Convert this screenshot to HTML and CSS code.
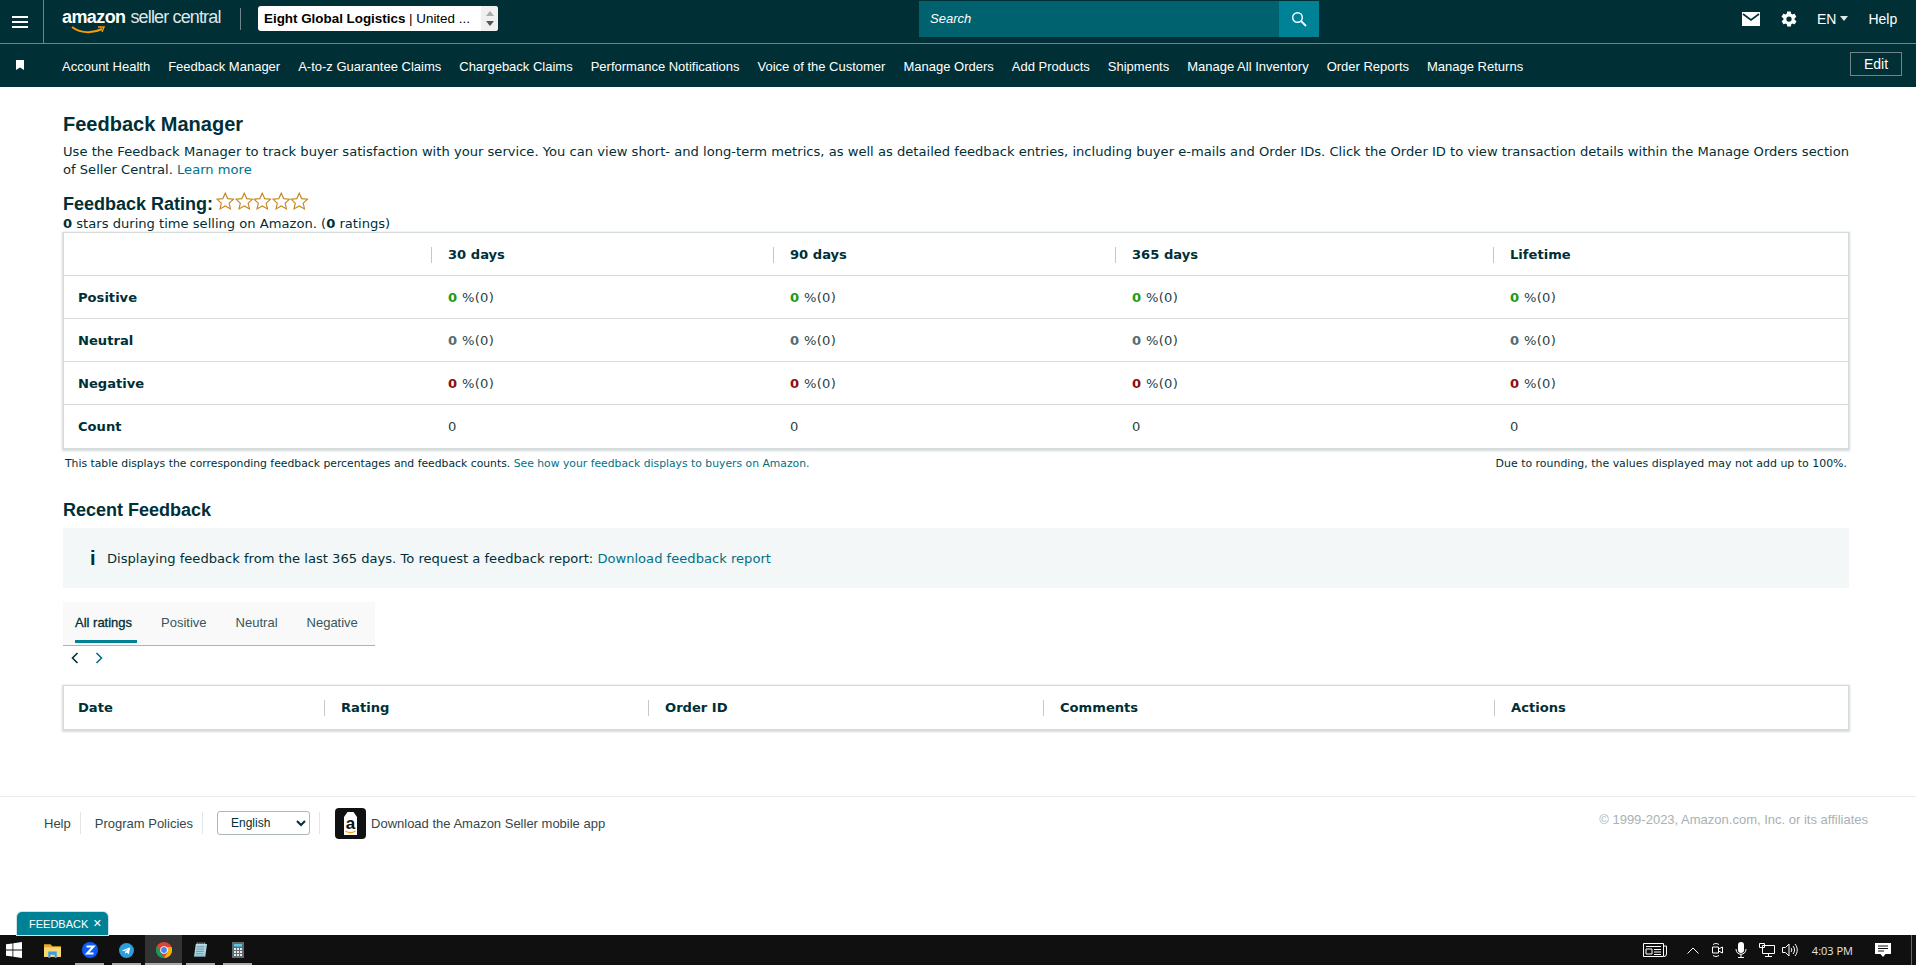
FILE: index.html
```html
<!DOCTYPE html>
<html lang="en">
<head>
    <meta charset="UTF-8">
    <meta name="viewport" content="width=device-width, initial-scale=1.0">
    <title>Feedback Manager - Amazon Seller Central</title>
    <link rel="stylesheet" href="styles.css">
</head>
<body>
    <div class="page">
        <header class="topbar">
            <div class="menu-cell">
                <svg class="icon-menu" viewBox="0 0 16 12"><path d="M0 1h16M0 6h16M0 11h16" stroke="#fff" stroke-width="2"/></svg>
            </div>
            <div class="logo">
                <span class="logo-amazon">amazon<svg class="logo-smile" viewBox="0 0 34 9"><path d="M1 1c8 6 20 7 30 2" fill="none" stroke="#f90" stroke-width="2"/><path d="M27 1l6 0-2 5" fill="none" stroke="#f90" stroke-width="1.4"/></svg></span>
                <span class="logo-seller">seller central</span>
            </div>
            <span class="top-sep"></span>
            <div class="account-select">
                <span class="account-text"><b>Eight Global Logistics</b> | United ...</span>
                <span class="account-spin"><i class="spin-up"></i><i class="spin-down"></i></span>
            </div>
            <div class="search">
                <span class="search-input">Search</span>
                <span class="search-btn">
                    <svg viewBox="0 0 16 16" width="16" height="16"><circle cx="6.5" cy="6.5" r="4.8" fill="none" stroke="#fff" stroke-width="1.4"/><path d="M10 10l5 5" stroke="#fff" stroke-width="1.8"/></svg>
                </span>
            </div>
            <div class="top-right">
                <svg class="icon-mail" viewBox="0 0 18 14"><path fill="#fff" d="M0 0h18v14H0z"/><path d="M1 2l8 6 8-6" fill="none" stroke="#002f36" stroke-width="1.6"/></svg>
                <svg class="icon-gear" viewBox="0 0 24 24"><path fill="#fff" fill-rule="evenodd" d="M19.4 13c.1-.3.1-.7.1-1s0-.7-.1-1l2.1-1.6c.2-.2.2-.4.1-.6l-2-3.5c-.1-.2-.4-.3-.6-.2l-2.5 1c-.5-.4-1.1-.7-1.7-1l-.4-2.6c0-.3-.2-.5-.5-.5h-4c-.3 0-.5.2-.5.5l-.4 2.6c-.6.3-1.2.6-1.7 1l-2.5-1c-.2-.1-.5 0-.6.2l-2 3.5c-.1.2-.1.4.1.6L4.6 11c0 .3-.1.7-.1 1s0 .7.1 1l-2.1 1.6c-.2.2-.2.4-.1.6l2 3.5c.1.2.4.3.6.2l2.5-1c.5.4 1.1.7 1.7 1l.4 2.6c0 .3.2.5.5.5h4c.3 0 .5-.2.5-.5l.4-2.6c.6-.3 1.2-.6 1.7-1l2.5 1c.2.1.5 0 .6-.2l2-3.5c.1-.2.1-.4-.1-.6L19.4 13zM12 15.5a3.5 3.5 0 1 1 0-7 3.5 3.5 0 0 1 0 7z"/></svg>
                <span class="lang">EN<i class="caret"></i></span>
                <span class="help">Help</span>
            </div>
        </header>

        <nav class="navbar">
            <svg class="icon-bookmark" viewBox="0 0 8 10"><path fill="#fff" d="M0 0h8v10L4 7.6 0 10z"/></svg>
            <div class="nav-links">
                <a>Account Health</a>
                <a>Feedback Manager</a>
                <a>A-to-z Guarantee Claims</a>
                <a>Chargeback Claims</a>
                <a>Performance Notifications</a>
                <a>Voice of the Customer</a>
                <a>Manage Orders</a>
                <a>Add Products</a>
                <a>Shipments</a>
                <a>Manage All Inventory</a>
                <a>Order Reports</a>
                <a>Manage Returns</a>
            </div>
            <span class="edit-btn">Edit</span>
        </nav>

        <main class="content">
            <h1 class="title">Feedback Manager</h1>
            <p class="intro">Use the Feedback Manager to track buyer satisfaction with your service. You can view short- and long-term metrics, as well as detailed feedback entries, including buyer e-mails and Order IDs. Click the Order ID to view transaction details within the Manage Orders section of Seller Central. <a class="link">Learn more</a></p>

            <div class="rating-head">
                <h2 class="rating-title">Feedback Rating:</h2>
                <div class="stars">
                    <svg viewBox="0 0 16 16"><use href="#star"/></svg>
                    <svg viewBox="0 0 16 16"><use href="#star"/></svg>
                    <svg viewBox="0 0 16 16"><use href="#star"/></svg>
                    <svg viewBox="0 0 16 16"><use href="#star"/></svg>
                    <svg viewBox="0 0 16 16"><use href="#star"/></svg>
                </div>
            </div>
            <p class="rating-sub"><b>0</b> stars during time selling on Amazon. (<b>0</b> ratings)</p>

            <div class="card">
                <div class="row row-head metrics">
                    <div></div>
                    <div class="cell-head">30 days</div>
                    <div class="cell-head">90 days</div>
                    <div class="cell-head">365 days</div>
                    <div class="cell-head">Lifetime</div>
                </div>
                <div class="row metrics">
                    <div class="row-label">Positive</div>
                    <div class="cell"><b class="pos">0</b> %(0)</div>
                    <div class="cell"><b class="pos">0</b> %(0)</div>
                    <div class="cell"><b class="pos">0</b> %(0)</div>
                    <div class="cell"><b class="pos">0</b> %(0)</div>
                </div>
                <div class="row metrics">
                    <div class="row-label">Neutral</div>
                    <div class="cell"><b class="neu">0</b> %(0)</div>
                    <div class="cell"><b class="neu">0</b> %(0)</div>
                    <div class="cell"><b class="neu">0</b> %(0)</div>
                    <div class="cell"><b class="neu">0</b> %(0)</div>
                </div>
                <div class="row metrics">
                    <div class="row-label">Negative</div>
                    <div class="cell"><b class="neg">0</b> %(0)</div>
                    <div class="cell"><b class="neg">0</b> %(0)</div>
                    <div class="cell"><b class="neg">0</b> %(0)</div>
                    <div class="cell"><b class="neg">0</b> %(0)</div>
                </div>
                <div class="row metrics">
                    <div class="row-label">Count</div>
                    <div class="cell">0</div>
                    <div class="cell">0</div>
                    <div class="cell">0</div>
                    <div class="cell">0</div>
                </div>
            </div>
            <div class="table-note">
                <span>This table displays the corresponding feedback percentages and feedback counts. <a class="link">See how your feedback displays to buyers on Amazon.</a></span>
                <span class="note-right">Due to rounding, the values displayed may not add up to 100%.</span>
            </div>

            <h2 class="recent-title">Recent Feedback</h2>
            <div class="info-box">
                <span class="info-i">i</span>
                <span>Displaying feedback from the last 365 days. To request a feedback report: <a class="link">Download feedback report</a></span>
            </div>

            <div class="tabs">
                <span class="tab tab-active">All ratings</span>
                <span class="tab">Positive</span>
                <span class="tab">Neutral</span>
                <span class="tab">Negative</span>
            </div>
            <div class="pager">
                <svg viewBox="0 0 8 12"><path d="M6.5 1L1.5 6l5 5" fill="none" stroke="#002f36" stroke-width="1.6"/></svg>
                <svg viewBox="0 0 8 12"><path d="M1.5 1l5 5-5 5" fill="none" stroke="#007185" stroke-width="1.6"/></svg>
            </div>

            <div class="card card-recent">
                <div class="row row-head recent">
                    <div class="cell-first">Date</div>
                    <div class="cell-head">Rating</div>
                    <div class="cell-head">Order ID</div>
                    <div class="cell-head">Comments</div>
                    <div class="cell-head">Actions</div>
                </div>
            </div>
        </main>

        <footer class="footer">
            <div class="footer-left">
                <span class="foot-link">Help</span>
                <span class="foot-sep"></span>
                <span class="foot-link">Program Policies</span>
                <span class="foot-sep"></span>
                <select class="foot-select"><option>English</option></select>
                <span class="foot-sep"></span>
                <svg class="app-icon" viewBox="0 0 31 31">
                    <rect width="31" height="31" rx="4" fill="#111"/>
                    <path d="M12.500 4h6l3.500 5v18H9V9z" fill="#fff"/>
                    <text x="15.500" y="21" text-anchor="middle" class="app-icon-a">a</text>
                    <path d="M10.500 23c3 2 7 2 10 0" fill="none" stroke="#f90" stroke-width="1.2"/>
                </svg>
                <span class="foot-link">Download the Amazon Seller mobile app</span>
            </div>
            <span class="copyright">© 1999-2023, Amazon.com, Inc. or its affiliates</span>
        </footer>

        <div class="taskbar">
            <div class="task-apps">
                <span class="task task-start">
                    <svg viewBox="0 0 16 16" width="16" height="16"><path fill="#fff" d="M0 2.3l6.5-.9v6.2H0zM7.300 1.300L16 0v7.600H7.300zM0 8.400h6.500v6.200L0 13.700zM7.300 8.400H16V16l-8.700-1.300z"/></svg>
                </span>
                <span class="task">
                    <svg viewBox="0 0 16 14" width="17" height="15"><path fill="#e8a92b" d="M0 1h6l2 2h8v10H0z"/><path fill="#f8d775" d="M0 4h16v9H0z"/><path fill="#3f9be0" d="M4 8h8v6h-2v-3H6v3H4z"/></svg>
                </span>
                <span class="task task-run">
                    <svg viewBox="0 0 16 16" width="16" height="16"><circle cx="8" cy="8" r="8" fill="#0b5cff"/><path d="M4.500 4.500h7L5 11.500h6.500" fill="none" stroke="#fff" stroke-width="2"/></svg>
                </span>
                <span class="task task-run">
                    <svg viewBox="0 0 16 16" width="15" height="15"><circle cx="8" cy="8" r="8" fill="#2b9fd9"/><path fill="#fff" d="M3 8l9-3.600-1.500 7.600-2.500-1.800-1.300 1.200-.3-2.200 3.800-3.200-4.800 2.800z"/></svg>
                </span>
                <span class="task task-run task-active">
                    <svg viewBox="0 0 16 16" width="16" height="16"><circle cx="8" cy="8" r="8" fill="#db4437"/><path fill="#0f9d58" d="M8 16A8 8 0 0 1 1 4l4 7 3 5z"/><path fill="#f4b400" d="M8 16l3.500-5.500L8 5h7.500A8 8 0 0 1 8 16z"/><circle cx="8" cy="8" r="3.800" fill="#fff"/><circle cx="8" cy="8" r="2.900" fill="#4285f4"/></svg>
                </span>
                <span class="task task-run">
                    <svg viewBox="0 0 16 16" width="15" height="16"><path fill="#a9d3e0" d="M3 1.500h12l-2 14H1z"/><path fill="#5f8a99" d="M1 15.500h12l.2-1.500H1.200z"/><path stroke="#4d7c8c" stroke-width=".7" d="M4 4.500h8M3.700 7h8M3.300 9.500h8M3 12h8"/><path stroke="#dfe6e7" stroke-width=".8" d="M4.500 0v3M6.500 0v3M8.500 0v3M10.500 0v3M12.500 0v3"/></svg>
                </span>
                <span class="task task-run">
                    <svg viewBox="0 0 12 16" width="12" height="16"><path fill="#5f6b73" d="M0 0h12v16H0z"/><path fill="#5cc8e8" d="M2 2h8v2.500H2z"/><path fill="#e6e6e6" d="M2 6h2v2H2zM5 6h2v2H5zM8 6h2v2H8zM2 9h2v2H2zM5 9h2v2H5zM8 9h2v2H8zM2 12h2v2H2zM5 12h2v2H5zM8 12h2v2H8z"/></svg>
                </span>
            </div>
            <div class="tray">
                <svg class="tray-news" viewBox="0 0 24 14" width="24" height="14"><path fill="none" stroke="#fff" d="M.5.5h20v13H.5zM20.500 3h3v8a2.500 2.500 0 0 1-2.500 2.500M3 3.500h15M3 6h6v5H3zM11 6.500h7M11 9h7M11 11.500h7"/></svg>
                <svg class="tray-caret" viewBox="0 0 12 7" width="12" height="7"><path d="M.5 6.500L6 1l5.500 5.500" fill="none" stroke="#fff"/></svg>
                <svg class="tray-meet" viewBox="0 0 12 16" width="12" height="16"><path fill="none" stroke="#fff" d="M1.500 5h6v6h-6zM7.500 7l4-2v6l-4-2M2 2.500c2-1.300 4-1.300 6 0M2 13.500c2 1.300 4 1.300 6 0"/></svg>
                <svg class="tray-mic" viewBox="0 0 12 16" width="12" height="16"><rect x="3" y="0" width="6" height="11" rx="3" fill="#fff"/><path d="M1 7c0 7 10 7 10 0M6 12v3M3 15.500h6" fill="none" stroke="#fff"/></svg>
                <svg class="tray-net" viewBox="0 0 16 14" width="16" height="14"><path fill="none" stroke="#fff" d="M3.500 2.500h12v8h-12zM9.500 10.500v3M6 13.500h7M.5.500h5v4h-5z"/></svg>
                <svg class="tray-vol" viewBox="0 0 16 14" width="16" height="14"><path fill="none" stroke="#fff" d="M.5 4.500h3l3.500-3.500v12l-3.500-3.500h-3zM9 5c1 1.300 1 2.700 0 4M11 3c2 2.500 2 5.500 0 8M13 1c3 3.500 3 8.500 0 12"/></svg>
                <span class="tray-time">4:03 PM</span>
                <svg class="tray-note" viewBox="0 0 16 15" width="16" height="15"><path fill="#fff" d="M0 0h16v11h-5.500L8 14l-2.500-3H0z"/><path stroke="#101010" d="M3 3h10M3 5.500h10M3 8h6"/></svg>
                <span class="tray-edge"></span>
            </div>
        </div>

        <div class="feedback-tab">FEEDBACK<span class="feedback-x">×</span></div>
    </div>

    <svg class="defs" width="0" height="0">
        <symbol id="star" viewBox="0 0 16 16">
            <path d="M8 1l2.100 4.700 5.100.5-3.800 3.400 1.100 5L8 12l-4.500 2.600 1.100-5L.8 6.200l5.100-.5z" fill="none" stroke="#c7861f" stroke-width="1"/>
        </symbol>
    </svg>
</body>
</html>
```

FILE: styles.css
```css
* {
    margin: 0;
    padding: 0;
    box-sizing: border-box;
}

html, body {
    height: 100%;
    overflow: hidden;
}

body {
    background: #fff;
    color: #002f36;
    font-family: "DejaVu Sans", sans-serif;
    font-size: 13.1px;
}

.page {
    position: relative;
    height: 965px;
    display: flex;
    flex-direction: column;
}

.defs {
    position: absolute;
}

.link {
    color: #007185;
}

/* top bar */
.topbar {
    height: 44px;
    flex: none;
    background: #002f36;
    border-bottom: 1px solid #6f8589;
    display: flex;
    color: #fff;
    font-family: "Liberation Sans", sans-serif;
}

.menu-cell {
    width: 44px;
    border-right: 1px solid #6f8589;
    display: flex;
    align-items: center;
    padding-left: 12px;
}

.icon-menu {
    width: 16px;
    height: 12px;
}

.logo {
    width: 178px;
    margin-left: 18px;
    display: flex;
    gap: 5px;
    padding-top: 7px;
    white-space: nowrap;
}

.logo-amazon {
    position: relative;
    font-size: 18px;
    font-weight: bold;
    letter-spacing: -0.6px;
}

.logo-smile {
    position: absolute;
    left: 9px;
    top: 19px;
    width: 34px;
    height: 9px;
}

.logo-seller {
    font-size: 18px;
    letter-spacing: -0.85px;
    color: #dfe6e7;
}

.top-sep {
    height: 22px;
    margin-top: 8px;
    border-left: 1px solid #6f8589;
}

.account-select {
    width: 240px;
    height: 25px;
    margin: 6px 0 0 17px;
    background: #fff;
    border-radius: 3px;
    color: #000;
    font-size: 13.4px;
    display: flex;
    align-items: center;
    padding-left: 6px;
}

.account-text {
    flex: 1;
    white-space: nowrap;
}

.account-spin {
    width: 17px;
    height: 25px;
    background: #f0f0f0;
    border-radius: 0 3px 3px 0;
    display: flex;
    flex-direction: column;
    align-items: center;
    justify-content: center;
    gap: 5px;
}

.spin-up {
    border: 4px solid transparent;
    border-top: 0;
    border-bottom: 5px solid #aaa;
}

.spin-down {
    border: 4px solid transparent;
    border-bottom: 0;
    border-top: 5px solid #555;
}

.search {
    width: 400px;
    height: 36px;
    margin: 1px 0 0 421px;
    background: #00626e;
    display: flex;
}

.search-input {
    flex: 1;
    padding-left: 11px;
    font-size: 13px;
    font-style: italic;
    line-height: 36px;
}

.search-btn {
    width: 40px;
    background: #008296;
    display: flex;
    align-items: center;
    justify-content: center;
}

.top-right {
    display: flex;
    align-items: center;
    margin-left: 423px;
    height: 37px;
    font-size: 14px;
}

.icon-mail {
    width: 18px;
    height: 14px;
}

.icon-gear {
    width: 18px;
    height: 18px;
    margin-left: 20px;
}

.lang {
    margin-left: 19px;
    display: flex;
    align-items: center;
}

.caret {
    margin-left: 4px;
    border: 4px solid transparent;
    border-bottom: 0;
    border-top: 5px solid #dfe6e7;
}

.help {
    margin-left: 20px;
}

/* nav bar */
.navbar {
    height: 43px;
    flex: none;
    background: #002f36;
    display: flex;
    align-items: center;
    color: #fff;
    font-family: "Liberation Sans", sans-serif;
    font-size: 13px;
}

.icon-bookmark {
    width: 8px;
    height: 10px;
    margin: 0 0 1px 16px;
}

.nav-links {
    margin: 2px 0 0 38px;
    display: flex;
    gap: 18px;
    flex: 1;
    white-space: nowrap;
}

.edit-btn {
    width: 52px;
    height: 24px;
    margin: 0 14px 3px 0;
    border: 1px solid #6f8589;
    line-height: 22px;
    text-align: center;
    font-size: 14px;
}

/* content */
.content {
    flex: 1;
    padding: 25px 67px 0 63px;
}

.title {
    font-family: "Liberation Sans", sans-serif;
    font-size: 20px;
    line-height: 24px;
}

.intro {
    margin-top: 7px;
    line-height: 18px;
    text-align: justify;
}

.rating-head {
    margin-top: 15px;
    display: flex;
    align-items: center;
    gap: 3px;
    height: 20px;
}

.rating-title {
    font-family: "Liberation Sans", sans-serif;
    font-size: 18px;
}

.stars {
    display: flex;
    margin-top: -5px;
}

.stars svg {
    width: 18.500px;
    height: 18.500px;
}

.rating-sub {
    padding-top: 1px;
    line-height: 17px;
}

.card {
    border: 1px solid #d5dbdb;
    box-shadow: 0 1px 2px 1px #d5d9d9;
}

.row {
    height: 43px;
    display: grid;
    align-items: center;
    border-bottom: 1px solid #d5dbdb;
}

.row:last-child {
    border-bottom: 0;
}

.metrics {
    grid-template-columns: 367px 342px 342px 378px 1fr;
}

.recent {
    grid-template-columns: 260px 324px 395px 451px 1fr;
}

.cell-head {
    font-weight: bold;
    padding-left: 17px;
    position: relative;
}

.cell-head::before {
    content: "";
    position: absolute;
    left: 0;
    top: 0;
    height: 16px;
    border-left: 1px solid #c2c9ca;
}

.cell-first,
.row-label {
    font-weight: bold;
    padding-left: 14px;
}

.cell {
    padding-left: 17px;
    color: #2b3f43;
    letter-spacing: 0.3px;
}

.pos {
    color: #1f9b12;
}

.neu {
    color: #5a6b74;
}

.neg {
    color: #8c0f0f;
}

.table-note {
    display: flex;
    justify-content: space-between;
    margin-top: 8px;
    padding: 0 2px;
    font-size: 10.800px;
    line-height: 14px;
}

.note-right {
    font-size: 10.950px;
}

.recent-title {
    margin-top: 28px;
    font-family: "Liberation Sans", sans-serif;
    font-size: 18px;
    line-height: 22px;
}

.info-box {
    margin-top: 7px;
    height: 60px;
    background: #f3f7f8;
    display: flex;
    align-items: center;
    padding-left: 27px;
}

.info-i {
    font-family: "Liberation Sans", sans-serif;
    font-size: 20px;
    font-weight: bold;
    width: 17px;
}

.tabs {
    margin-top: 14px;
    width: 312px;
    height: 44px;
    background: #f9f9f9;
    border-bottom: 1px solid #aab7b8;
    display: flex;
    gap: 29px;
    padding-left: 12px;
    font-family: "Liberation Sans", sans-serif;
    font-size: 13px;
    line-height: 42px;
}

.tab {
    height: 41px;
    color: #35575c;
}

.tab-active {
    color: #002f36;
    border-bottom: 3px solid #008296;
    padding-right: 5px;
    margin-right: -5px;
    -webkit-text-stroke: 0.3px #002f36;
}

.pager {
    display: flex;
    gap: 16px;
    margin: 6px 0 0 8px;
    height: 12px;
}

.pager svg {
    width: 8px;
    height: 12px;
}

.card-recent {
    margin-top: 21px;
}

/* footer */
.footer {
    flex: none;
    height: 139px;
    border-top: 1px solid #e8eaea;
    display: flex;
    justify-content: space-between;
    padding: 11px 48px 0 44px;
    font-family: "Liberation Sans", sans-serif;
    font-size: 13px;
}

.footer-left {
    display: flex;
    align-items: center;
    height: 30px;
}

.foot-link {
    color: #35474c;
}

.foot-sep {
    height: 22px;
    margin: 0 14px 0 9px;
    border-left: 1px solid #e3e6e6;
}

.foot-select {
    width: 93px;
    height: 24px;
    border: 1px solid #aab7b8;
    border-radius: 3px;
    background: #fff;
    color: #002f36;
    font-family: "Liberation Sans", sans-serif;
    font-size: 12px;
    padding-left: 9px;
}

.app-icon {
    width: 31px;
    height: 31px;
    margin: 0 5px 0 1px;
}

.app-icon-a {
    font-family: "Liberation Sans", sans-serif;
    font-size: 17px;
    font-weight: bold;
    fill: #111;
}

.copyright {
    color: #a9b1b3;
    font-size: 13px;
    line-height: 24px;
}

/* windows taskbar */
.taskbar {
    flex: none;
    height: 30px;
    background: #101010;
    display: flex;
    justify-content: space-between;
}

.task-apps {
    display: flex;
}

.task {
    width: 37px;
    height: 30px;
    display: flex;
    align-items: center;
    justify-content: center;
}

.task-start {
    width: 28px;
    margin-right: 6px;
}

.task-run {
    position: relative;
}

.task-run::after {
    content: "";
    position: absolute;
    left: 4px;
    right: 4px;
    bottom: 0;
    height: 2px;
    background: #aaa;
}

.task-active {
    background: #333;
}

.task-active::after {
    left: 0;
    right: 0;
}

.tray {
    display: flex;
    align-items: center;
    color: #e6e6e6;
    font-family: "Open Sans", sans-serif;
    font-size: 11px;
}

.tray-caret {
    margin-left: 20px;
}

.tray-meet,
.tray-mic,
.tray-net {
    margin-left: 12px;
}

.tray-vol {
    margin-left: 7px;
}

.tray-time {
    margin-left: 14px;
}

.tray-note {
    margin-left: 22px;
}

.tray-edge {
    margin-left: 20px;
    height: 30px;
    width: 5px;
    border-left: 1px solid #666;
}

.feedback-tab {
    position: absolute;
    left: 17px;
    bottom: 30px;
    width: 91px;
    height: 23px;
    background: #008296;
    border-radius: 5px 5px 0 0;
    box-shadow: 0 0 0 1px #cfe3e6;
    color: #fff;
    font-family: "Liberation Sans", sans-serif;
    font-size: 11px;
    line-height: 23px;
    padding-left: 12px;
}

.feedback-x {
    margin-left: 5px;
    font-size: 14px;
}
```
